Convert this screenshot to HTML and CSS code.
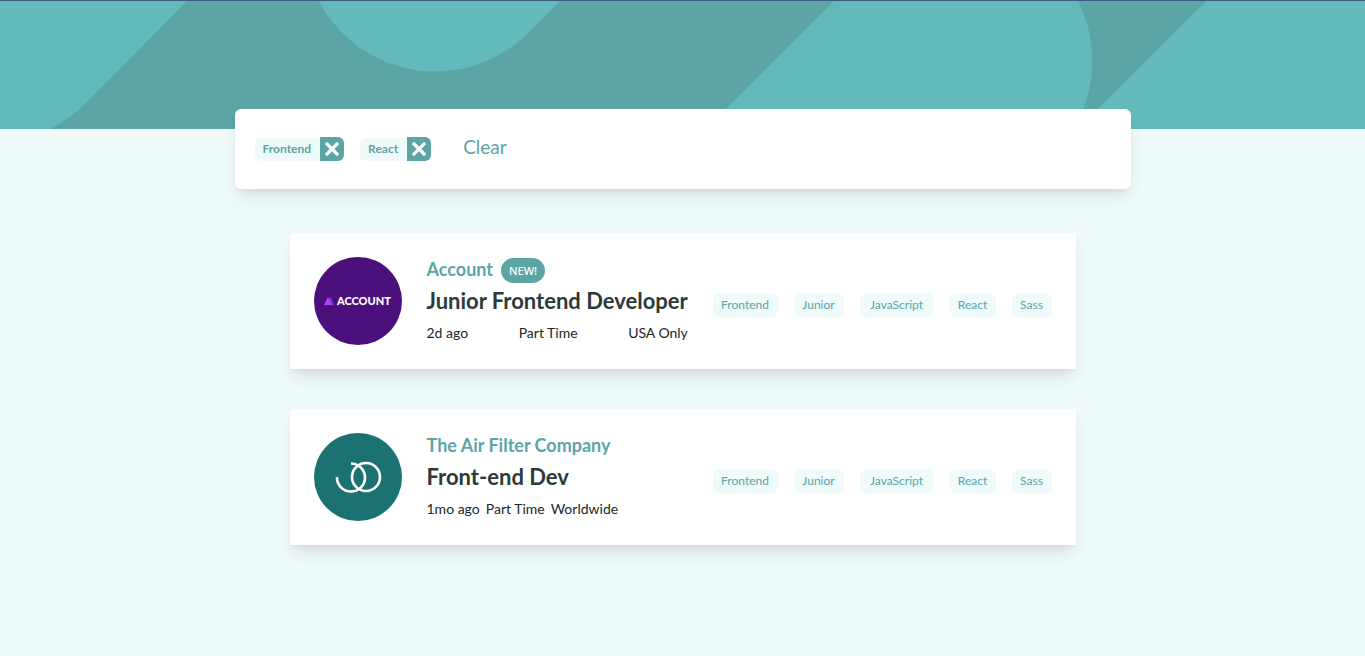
FILE: index.html
```html
<!DOCTYPE html>
<html lang="en">
<head>
<meta charset="utf-8">
<meta name="viewport" content="width=device-width, initial-scale=1">
<title>Job listings</title>
<link rel="stylesheet" href="styles.css">
</head>
<body>
<header class="banner">
  <svg class="banner-art" viewBox="0 0 1365 128" preserveAspectRatio="none" aria-hidden="true">
    <g fill="#63babb">
      <path d="M0 0H187L84 104A131 131 0 0 1 50 128H0Z"/>
      <path d="M319 0A131 131 0 0 0 528 32L560 0Z"/>
      <path d="M834 0H1078A131 131 0 0 1 1073 128H706Z"/>
      <path d="M1206 0H1365V128H1078Z"/>
    </g>
  </svg>
</header>
<main class="page">
  <section class="filters" aria-label="Active filters">
    <div class="filter">
      <span class="filter-name">Frontend</span>
      <button class="filter-remove" type="button" aria-label="Remove Frontend"><svg width="14" height="14" viewBox="0 0 14 14"><path d="M2 2L12 12M12 2L2 12" stroke="#fff" stroke-width="3.200" stroke-linecap="square"/></svg></button>
    </div>
    <div class="filter">
      <span class="filter-name">React</span>
      <button class="filter-remove" type="button" aria-label="Remove React"><svg width="14" height="14" viewBox="0 0 14 14"><path d="M2 2L12 12M12 2L2 12" stroke="#fff" stroke-width="3.200" stroke-linecap="square"/></svg></button>
    </div>
    <button class="clear" type="button">Clear</button>
  </section>

  <div class="jobs">
    <article class="job">
      <svg class="logo" width="88" height="88" viewBox="0 0 88 88" role="img" aria-label="Account">
        <circle cx="44" cy="44" r="44" fill="#4b107b"/>
        <path d="M15 41L17 40L20 48H16Z" fill="#6a28ad"/>
        <path d="M15 42L17 40L20 48H16Z" fill="#7a30c0"/>
        <path d="M10 48L14 40L18 48Z" fill="#b344fb"/>
        <text class="logo-text" x="23" y="48">ACCOUNT</text>
      </svg>
      <div class="info">
        <div class="company"><span>Account</span><span class="badge">NEW!</span></div>
        <h2 class="title">Junior Frontend Developer</h2>
        <div class="meta"><span>2d ago</span><span>Part Time</span><span>USA Only</span></div>
      </div>
      <div class="tags">
        <button class="tag" type="button">Frontend</button>
        <button class="tag" type="button">Junior</button>
        <button class="tag" type="button">JavaScript</button>
        <button class="tag" type="button">React</button>
        <button class="tag" type="button">Sass</button>
      </div>
    </article>

    <article class="job">
      <svg class="logo" width="88" height="88" viewBox="0 0 88 88" role="img" aria-label="The Air Filter Company">
        <circle cx="44" cy="44" r="44" fill="#1b7271"/>
        <g fill="none" stroke="#fff" stroke-width="2.600">
          <circle cx="52" cy="44" r="14"/>
          <path d="M37 30.500A14 14 0 1 1 23 44"/>
        </g>
      </svg>
      <div class="info">
        <div class="company"><span>The Air Filter Company</span></div>
        <h2 class="title">Front-end Dev</h2>
        <div class="meta"><span>1mo ago</span><span>Part Time</span><span>Worldwide</span></div>
      </div>
      <div class="tags">
        <button class="tag" type="button">Frontend</button>
        <button class="tag" type="button">Junior</button>
        <button class="tag" type="button">JavaScript</button>
        <button class="tag" type="button">React</button>
        <button class="tag" type="button">Sass</button>
      </div>
    </article>
  </div>
</main>
</body>
</html>
```

FILE: styles.css
```css
* { box-sizing: border-box; }

body {
  margin: 0;
  min-height: 100vh;
  background: #effafa;
  color: #2c3a3a;
  font-family: Lato, "Liberation Sans", sans-serif;
}

button {
  border: 0;
  margin: 0;
  font-family: inherit;
  cursor: pointer;
}

.banner {
  height: 129px;
  border-top: 1px solid #3d5a80;
  background: #5ca5a5;
}

.banner-art {
  display: block;
  width: 100%;
  height: 128px;
}

.page { padding: 0 24px 40px; }

.filters {
  position: relative;
  display: flex;
  align-items: center;
  gap: 16px;
  max-width: 896px;
  min-height: 80px;
  margin: -20px auto 44px;
  padding: 20px;
  border-radius: 6px;
  background: #fff;
  box-shadow: 0 10px 15px -3px rgba(0, 0, 0, 0.1), 0 4px 6px -2px rgba(0, 0, 0, 0.05);
}

.filter {
  display: flex;
  align-items: center;
}

.filter-name {
  padding: 0 9px 2px 8px;
  border-radius: 6px 0 0 6px;
  background: #effafa;
  color: #5ca5a5;
  font-size: 12px;
  font-weight: 700;
  line-height: 21px;
}

.filter-remove {
  display: flex;
  align-items: center;
  justify-content: center;
  width: 24px;
  height: 24px;
  padding: 0;
  border-radius: 0 6px 6px 0;
  background: #5ca5a5;
}

.clear {
  padding: 0 16px 4px;
  background: none;
  color: #5ca5a5;
  font-size: 19px;
  line-height: 24px;
}

.jobs {
  display: grid;
  gap: 40px;
  max-width: 786px;
  margin: 0 auto;
}

.job {
  display: flex;
  align-items: center;
  gap: 24px;
  min-height: 136px;
  padding: 24px;
  background: #fff;
  box-shadow: 0 10px 15px -3px rgba(0, 0, 0, 0.1), 0 4px 6px -2px rgba(0, 0, 0, 0.05);
}

.logo { flex: none; }

.logo-text {
  fill: #fff;
  font-size: 11px;
  font-weight: 900;
}

.info {
  flex: none;
  padding-left: 1px;
}

.company {
  display: flex;
  align-items: flex-start;
  gap: 8px;
  height: 26px;
  color: #5ca5a5;
  font-size: 18px;
  font-weight: 700;
  line-height: 24px;
}

.badge {
  margin-top: 1px;
  padding: 0 8px;
  border-radius: 13px;
  background: #5ca5a5;
  color: #fff;
  font-family: "Noto Sans", sans-serif;
  font-size: 11px;
  font-weight: 500;
  line-height: 25px;
}

.title {
  margin: 2px 0 4px;
  font-size: 22px;
  font-weight: 700;
  line-height: 32px;
}

.meta {
  display: flex;
  justify-content: space-between;
  gap: 6px;
  font-size: 14px;
  line-height: 24px;
  color: #1c2626;
}

.tags {
  display: grid;
  grid-template-columns: 65px 50px 74px 46px 40px;
  gap: 16px;
  margin-left: auto;
  padding-top: 8px;
}

.tag {
  padding: 0 0 2px;
  border-radius: 6px;
  background: #effafa;
  color: #5ca5a5;
  font-size: 12px;
  line-height: 21px;
}
```
